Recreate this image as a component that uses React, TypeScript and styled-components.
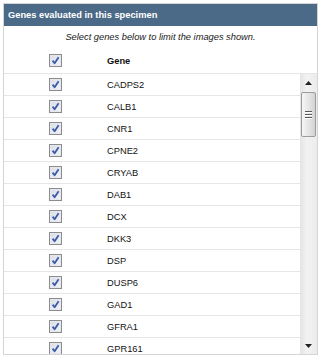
import React from "react";
import styled, { createGlobalStyle } from "styled-components";

const GlobalStyle = createGlobalStyle`
  body {
    margin: 0;
    background: #ffffff;
    font-family: "Liberation Sans", Arial, sans-serif;
  }
`;

const genes = [
  "CADPS2",
  "CALB1",
  "CNR1",
  "CPNE2",
  "CRYAB",
  "DAB1",
  "DCX",
  "DKK3",
  "DSP",
  "DUSP6",
  "GAD1",
  "GFRA1",
  "GPR161",
  "GRIK1",
  "HTR2C",
  "NEFH",
];

const Panel = styled.div`
  box-sizing: border-box;
  margin: 3px;
  width: 315px;
  height: 352px;
  border: 1px solid #d4d4d4;
  display: flex;
  flex-direction: column;
  font-size: 9.3px;
  color: #111;
`;

const TitleBar = styled.div`
  height: 22px;
  flex: none;
  background: #4b6a87;
  color: #ffffff;
  font-weight: bold;
  padding-left: 4px;
  display: flex;
  align-items: center;
`;

const Hint = styled.div`
  height: 22px;
  flex: none;
  font-style: italic;
  color: #222;
  display: flex;
  align-items: center;
  justify-content: center;
`;

const HeadRow = styled.div`
  height: 25px;
  flex: none;
  display: grid;
  grid-template-columns: 103px 1fr;
  align-items: center;
  border-bottom: 1px solid #e6e6e6;
  font-weight: bold;
`;

const Body = styled.div`
  flex: 1;
  min-height: 0;
  display: flex;
`;

const List = styled.div`
  flex: 1;
  overflow: hidden;
`;

const Row = styled.div`
  height: 21px;
  display: grid;
  grid-template-columns: 103px 1fr;
  align-items: center;
  border-bottom: 1px solid #e6e6e6;
`;

const BoxCell = styled.div`
  display: flex;
  justify-content: center;
  align-items: center;
`;

const Box = styled.span`
  box-sizing: border-box;
  width: 13px;
  height: 13px;
  border: 1px solid #8c8c8c;
  background: linear-gradient(135deg, #d9dde8, #f3f4f8);
  box-shadow: inset 0 0 0 1px #e6e8ef;
  display: flex;
  align-items: center;
  justify-content: center;
`;

const ScrollBar = styled.div`
  width: 17px;
  flex: none;
  background: linear-gradient(90deg, #e4e4e4, #f2f2f2 40%, #ececec);
  display: flex;
  flex-direction: column;
`;

const ArrowButton = styled.div`
  height: 17px;
  flex: none;
  display: flex;
  align-items: center;
  justify-content: center;
`;

const Thumb = styled.div`
  box-sizing: border-box;
  margin: 1px 1px 0 1px;
  height: 45px;
  flex: none;
  border: 1px solid #9c9c9c;
  border-radius: 2px;
  background: linear-gradient(90deg, #f6f6f6, #e2e2e2 60%, #d2d2d2);
  display: flex;
  flex-direction: column;
  align-items: center;
  justify-content: center;
  gap: 2px;
`;

const Grip = styled.span`
  width: 7px;
  height: 1px;
  background: #5a5a5a;
  box-shadow: 0 1px 0 #ffffff;
`;

const Track = styled.div`
  flex: 1;
`;

const Check = () => (
  <Box>
    <svg width="9" height="9" viewBox="0 0 9 9">
      <path
        d="M1.6 4.6 L3.6 7.2 L7.6 1.2"
        fill="none"
        stroke="#3b5aa6"
        strokeWidth="1.8"
        strokeLinejoin="round"
      />
    </svg>
  </Box>
);

const Arrow = ({ down }: { down?: boolean }) => (
  <svg width="7" height="4" viewBox="0 0 7 4">
    <path d={down ? "M0 0 H7 L3.5 4 Z" : "M0 4 H7 L3.5 0 Z"} fill="#222" />
  </svg>
);

const App = () => (
  <>
    <GlobalStyle />
    <Panel>
      <TitleBar>Genes evaluated in this specimen</TitleBar>
      <Hint>Select genes below to limit the images shown.</Hint>
      <HeadRow>
        <BoxCell>
          <Check />
        </BoxCell>
        <span>Gene</span>
      </HeadRow>
      <Body>
        <List>
          {genes.map((g) => (
            <Row key={g}>
              <BoxCell>
                <Check />
              </BoxCell>
              <span>{g}</span>
            </Row>
          ))}
        </List>
        <ScrollBar>
          <ArrowButton>
            <Arrow />
          </ArrowButton>
          <Thumb>
            <Grip />
            <Grip />
            <Grip />
          </Thumb>
          <Track />
          <ArrowButton>
            <Arrow down />
          </ArrowButton>
        </ScrollBar>
      </Body>
    </Panel>
  </>
);

export default App;
